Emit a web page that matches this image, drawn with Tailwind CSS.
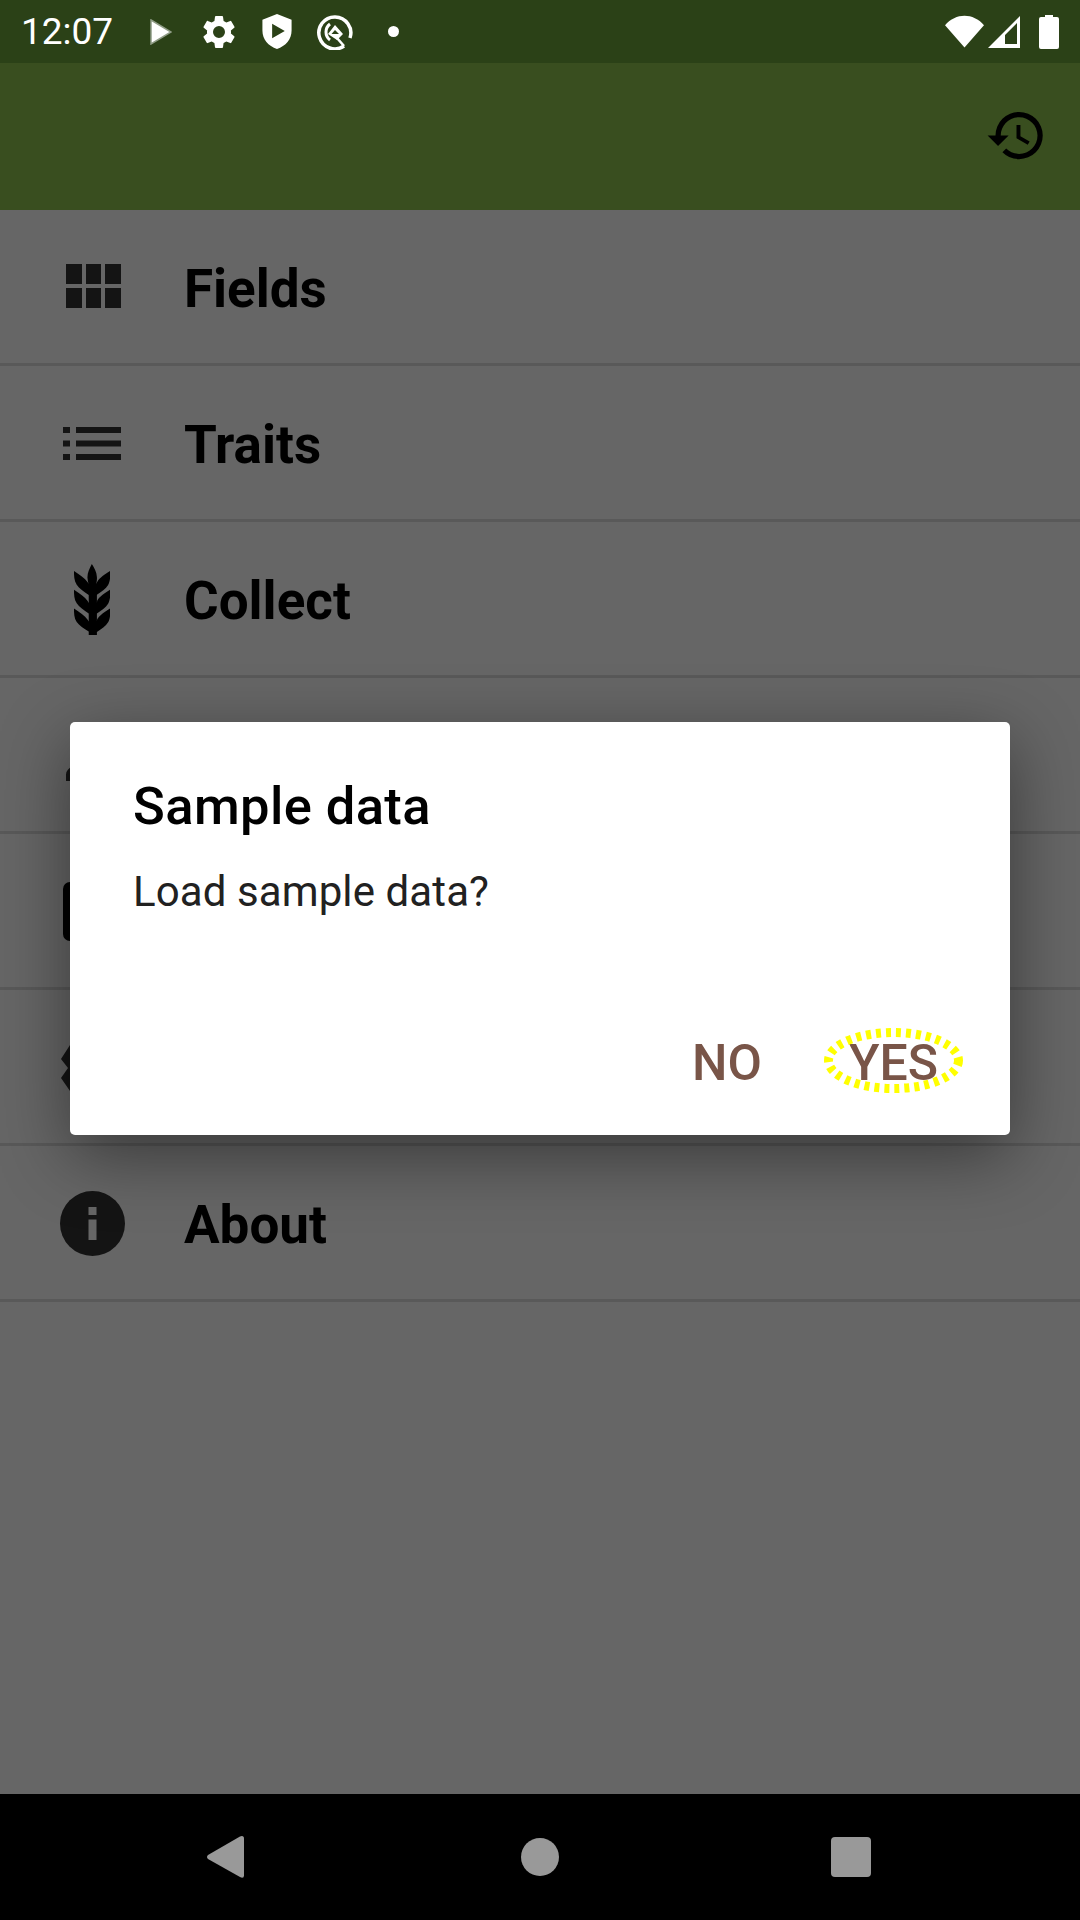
<!DOCTYPE html>
<html lang="en">
<head>
  <meta charset="UTF-8">
  <title>Field Book</title>
  <script src="https://cdn.jsdelivr.net/npm/@tailwindcss/browser@4"></script>
</head>
<body class="bg-[#666666] font-['Roboto',sans-serif]">
  <div class="relative w-[1080px] h-[1920px] overflow-hidden flex flex-col bg-[#666666]">

    <!-- status bar -->
    <div class="h-[63px] bg-[#2b4117] flex items-center text-white shrink-0">
      <span class="ml-[21px] w-[129px] text-[37px] leading-none font-normal">12:07</span>
      <svg class="w-[22px] h-[26px]" viewBox="0 0 22 26"><path d="M1 1 L21 13 L1 25 Z" fill="#fff" stroke="#8f9c86" stroke-width="1.500"/></svg>
      <svg class="ml-[27px] w-[40px] h-[40px]" viewBox="0 0 24 24"><path fill="#fff" d="M19.14 12.94c.04-.3.06-.61.06-.94 0-.32-.02-.64-.07-.94l2.03-1.58a.49.49 0 0 0 .12-.61l-1.92-3.32a.49.49 0 0 0-.59-.22l-2.39.96c-.5-.38-1.03-.7-1.62-.94l-.36-2.54a.48.48 0 0 0-.48-.41h-3.84c-.24 0-.43.17-.47.41l-.36 2.54c-.59.24-1.13.57-1.62.94l-2.39-.96c-.22-.08-.47 0-.59.22L2.74 8.87c-.12.21-.08.47.12.61l2.03 1.58c-.05.3-.09.63-.09.94s.02.64.07.94l-2.03 1.58a.49.49 0 0 0-.12.61l1.92 3.32c.12.22.37.29.59.22l2.39-.96c.5.38 1.03.7 1.62.94l.36 2.54c.05.24.24.41.48.41h3.84c.24 0 .44-.17.47-.41l.36-2.54c.59-.24 1.13-.56 1.62-.94l2.39.96c.22.08.47 0 .59-.22l1.92-3.32c.12-.22.07-.47-.12-.61l-2.01-1.58zM12 15.6A3.6 3.6 0 1 1 12 8.4a3.6 3.6 0 0 1 0 7.2z"/></svg>
      <svg class="ml-[23px] w-[30px] h-[35px]" viewBox="0 0 30 36"><path fill="#fff" fill-rule="evenodd" d="M15 0 L30 6 V17 C30 26 24 33 15 36 C6 33 0 26 0 17 V6 Z M10 10 V25 L23 17.5 Z"/></svg>
      <svg class="ml-[25px] w-[36px] h-[36px]" viewBox="0 0 36 36">
        <path d="M27 32 A16 16 0 1 1 33 24" fill="none" stroke="#fff" stroke-width="3.500"/>
        <path d="M13 10 A10 10 0 0 0 13 26" fill="none" stroke="#fff" stroke-width="3"/>
        <path fill="#fff" fill-rule="evenodd" d="M18 11 L26 20 L20 26 L11 20 Z M14.500 20 L18 16 L22 20 Z"/>
        <path d="M20 24 L27 32" stroke="#fff" stroke-width="2.500"/>
      </svg>
      <span class="ml-[35px] w-[11px] h-[11px] rounded-full bg-white"></span>
      <div class="ml-auto mr-[21px] flex items-center">
        <svg class="w-[39px] h-[33px]" viewBox="0 0 40 33"><path fill="#fff" d="M0 10 C11 -3 29 -3 40 10 L20 33 Z"/></svg>
        <svg class="ml-[4px] w-[32px] h-[32px]" viewBox="0 0 32 32"><path fill="#fff" fill-rule="evenodd" d="M0 32 L32 0 V32 Z M17 28 H29 V7 L17 19 Z"/></svg>
        <svg class="ml-[19px] w-[20px] h-[34px]" viewBox="0 0 20 34"><path fill="#fff" d="M6 0 H14 V2 H18 Q20 2 20 4 V32 Q20 34 18 34 H2 Q0 34 0 32 V4 Q0 2 2 2 H6 Z"/></svg>
      </div>
    </div>

    <!-- toolbar -->
    <div class="h-[147px] bg-[#394e1f] flex justify-end items-start shrink-0 pr-[32px] pt-[41px]">
      <svg class="w-[63px] h-[63px]" viewBox="0 0 24 24"><path fill="#000" d="M13 3a9 9 0 0 0-9 9H1l3.89 3.89.07.14L9 12H6c0-3.87 3.13-7 7-7s7 3.13 7 7-3.13 7-7 7c-1.93 0-3.68-.79-4.94-2.06l-1.42 1.42A8.954 8.954 0 0 0 13 21a9 9 0 0 0 0-18zm-1 5v5l4.28 2.54.72-1.21-3.5-2.08V8H12z"/></svg>
    </div>

    <!-- menu: the labels of rows 4-6 sit behind the dialog, only their icons show -->
    <div class="flex flex-col text-black text-[53px] font-bold leading-none">
      <div class="h-[156px] border-b-[3px] border-[#595959] flex items-center">
        <div class="w-[184px] shrink-0 flex justify-center pl-[3px] mt-[-1px]">
          <svg class="w-[55px] h-[44px]" viewBox="0 0 55 44"><path fill="#141414" d="M0 0h16v20H0zM20 0h15v20H20zM39 0h16v20H39zM0 24h16v20H0zM20 24h15v20H20zM39 24h16v20H39z"/></svg>
        </div>
        <span class="mt-[5px]">Fields</span>
      </div>
      <div class="h-[156px] border-b-[3px] border-[#595959] flex items-center">
        <div class="w-[184px] shrink-0 flex justify-center mt-[1px]">
          <svg class="w-[58px] h-[33px]" viewBox="0 0 58 33"><path fill="#141414" d="M0 0h7v6H0zM13 0h45v6H13zM0 13.500h7v6H0zM13 13.500h45v6H13zM0 27h7v6H0zM13 27h45v6H13z"/></svg>
        </div>
        <span class="mt-[5px]">Traits</span>
      </div>
      <div class="h-[156px] border-b-[3px] border-[#595959] flex items-center">
        <div class="w-[184px] shrink-0 flex justify-center mt-[1px]">
          <svg class="w-[36px] h-[71px]" viewBox="6.5 2 11 20" preserveAspectRatio="none"><path fill="#000" d="M7.33 18.33C6.5 17.17 6.500 15.83 6.500 14.500C8.170 15.500 9.830 16.500 10.670 17.670L11 18.230V15.950C9.500 15.050 8.080 14.130 7.330 13.080C6.500 11.920 6.500 10.580 6.500 9.250C8.170 10.250 9.830 11.250 10.670 12.420L11 13V10.700C9.500 9.800 8.080 8.880 7.330 7.830C6.500 6.670 6.500 5.330 6.500 4C8.170 5 9.830 6 10.670 7.170C10.770 7.310 10.860 7.460 10.940 7.620C10.770 7 10.660 6.420 10.610 5.850C10.570 4.500 11.260 3.250 11.950 2C12.710 3.160 13.460 4.330 13.500 5.670C13.550 6.300 13.500 6.930 13.290 7.600C13.380 7.420 13.500 7.250 13.580 7.080C14.330 5.830 15.920 4.920 17.500 4C17.580 5.330 17.670 6.670 16.920 7.920C16.250 9 14.830 9.830 13.500 10.670V13L13.580 12.330C14.330 11.080 15.920 10.170 17.500 9.250C17.580 10.580 17.670 11.920 16.920 13.170C16.250 14.250 14.830 15.080 13.500 15.920V18.250L13.580 17.580C14.330 16.330 15.920 15.420 17.500 14.500C17.580 15.830 17.670 17.170 16.920 18.420C16.250 19.500 14.830 20.330 13.500 21.170V22H11V21.040C9.500 20.100 8.080 19.380 7.330 18.330Z"/></svg>
        </div>
        <span class="mt-[5px]">Collect</span>
      </div>
      <div class="h-[156px] border-b-[3px] border-[#595959] flex items-center">
        <div class="w-[184px] shrink-0 flex justify-center mt-[1px]">
          <svg class="w-[78px] h-[78px]" viewBox="0 0 24 24"><path fill="#141414" d="M12 12c2.210 0 4-1.790 4-4s-1.790-4-4-4-4 1.790-4 4 1.790 4 4 4zm0 2c-2.670 0-8 1.340-8 4v2h16v-2c0-2.660-5.330-4-8-4z"/></svg>
        </div>
      </div>
      <div class="h-[156px] border-b-[3px] border-[#595959] flex items-center">
        <div class="w-[184px] shrink-0 flex justify-center mt-[1px]">
          <svg class="w-[58px] h-[59px]" viewBox="0 0 58 59"><rect width="58" height="59" rx="7" fill="#000"/></svg>
        </div>
      </div>
      <div class="h-[156px] border-b-[3px] border-[#595959] flex items-center">
        <div class="w-[184px] shrink-0 flex justify-center mt-[2px]">
          <svg class="w-[62px] h-[46px]" viewBox="0 0 62 46"><path fill="#141414" d="M9 0 L0 14 L7 23 L0 33 L9 46 H53 L62 33 L55 23 L62 14 L53 0 Z"/></svg>
        </div>
      </div>
      <div class="h-[156px] border-b-[3px] border-[#595959] flex items-center">
        <div class="w-[184px] shrink-0 flex justify-center mt-[1px]">
          <svg class="w-[65px] h-[65px]" viewBox="0 0 65 65"><circle cx="32.500" cy="32.500" r="32.500" fill="#141414"/><path fill="#666" d="M28.500 16h8v8h-8zM28.500 28.500h8V49h-8z"/></svg>
        </div>
        <span class="mt-[5px]">About</span>
      </div>
    </div>

    <!-- nav bar -->
    <div class="mt-auto h-[126px] bg-black flex items-center shrink-0">
      <svg class="ml-[207px] w-[37px] h-[42px]" viewBox="0 0 37 44" preserveAspectRatio="none"><path fill="#999" d="M1 20 L33 0.500 Q37 -1 37 3 V41 Q37 45 33 43 L1 24 Q-1 22 1 20 Z"/></svg>
      <span class="ml-[277px] w-[38px] h-[38px] rounded-full bg-[#999]"></span>
      <span class="ml-[272px] w-[40px] h-[40px] rounded-[4px] bg-[#999]"></span>
    </div>

    <!-- dialog -->
    <div class="absolute left-[70px] top-[722px] w-[940px] h-[413px] bg-white rounded-[5px] shadow-[0_20px_70px_rgba(0,0,0,0.45)] flex flex-col">
      <h2 class="ml-[63px] mt-[54px] text-[52.5px] leading-[60px] tracking-[0.4px] font-medium text-black">Sample data</h2>
      <p class="ml-[63px] mt-[30px] text-[42px] leading-[52px] tracking-[0.1px] text-[#212121]">Load sample data?</p>
      <div class="mt-auto mb-[44px] flex justify-end pr-[72px] gap-[87px] items-center text-[50px] leading-[56px] font-medium text-[#795548]">
        <span>NO</span>
        <span class="relative">YES
          <svg class="absolute left-[-25px] top-[-7px] w-[139px] h-[65px]" viewBox="0 0 139 65"><ellipse cx="69.500" cy="32.500" rx="65" ry="28" fill="none" stroke="#ffff00" stroke-width="9" stroke-dasharray="5 5"/></svg>
        </span>
      </div>
    </div>
  </div>
</body>
</html>
